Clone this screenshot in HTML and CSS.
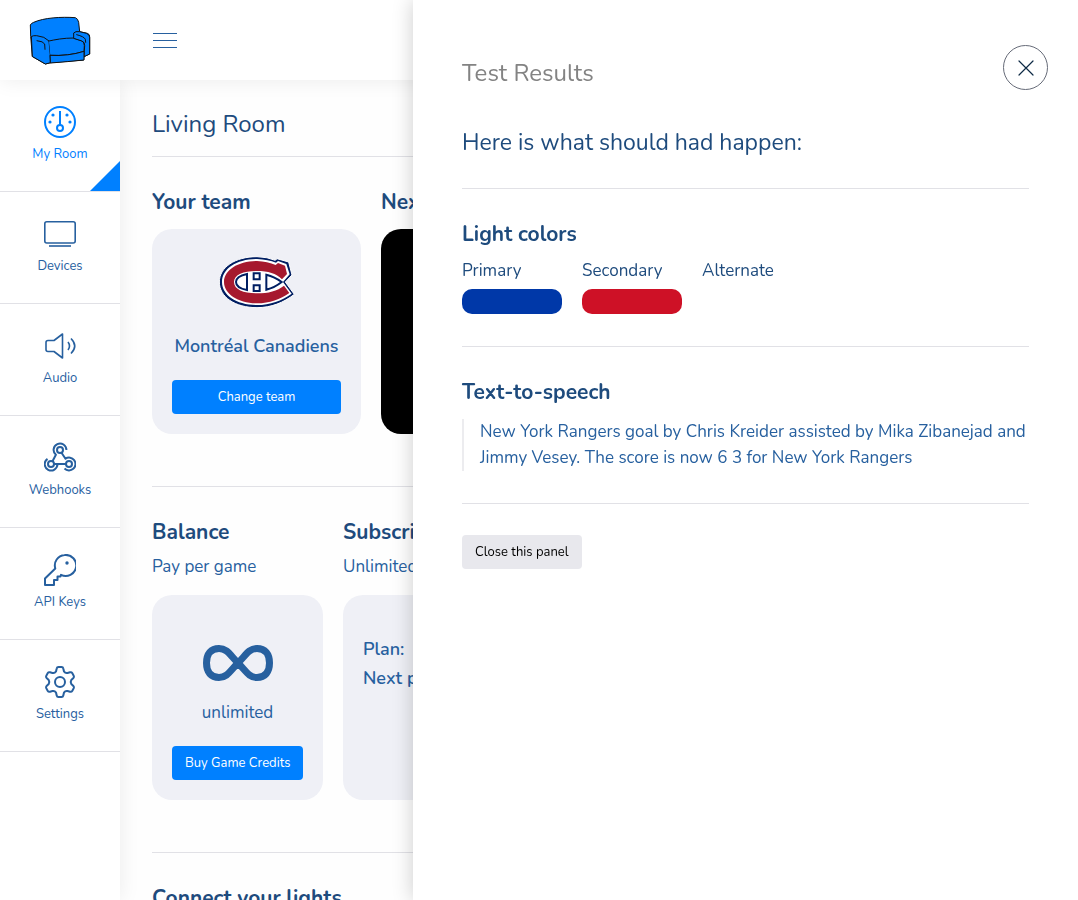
FILE: index.html
```html
<!DOCTYPE html>
<html lang="en">
<head>
    <meta charset="UTF-8">
    <meta name="viewport" content="width=device-width, initial-scale=1.0">
    <title>Living Room</title>
    <link rel="stylesheet" href="styles.css">
</head>
<body>
    <header class="topbar">
        <a href="#" class="brand" aria-label="Home">
            <svg class="brand-logo" viewBox="87 45 186 147" fill="#0080ff" stroke="#111" stroke-width="3" stroke-linecap="round" stroke-linejoin="round">
                <path d="M92 105 L91 72 Q93 67 101 64 C132 50 184 47 226 50 Q234 53 236 64 L239 92 L262 97 Q270 100 269 108 L269 159 L252 167 L251 177 L152 185 L136 189 L98 167 Z"/>
                <path d="M95 106 Q99 103 110 104 Q134 106 147 120 L151 163 L152 185 L136 189 L98 167 Z"/>
                <path d="M147 120 C165 116 190 111 221 111 L246 120 Q254 125 253 134 L252 151 Q205 166 151 163"/>
                <path d="M221 111 L221 96 Q226 90 239 92 L259 97 Q270 101 269 110 L269 159 L252 167 L254 134 Q255 123 246 120 Z"/>
                <path d="M111 119 Q130 121 134 129 L135 145 M230 101 Q253 107 256 115 L257 124" fill="none"/>
                <path d="M151 163 Q205 166 252 151 L252 177 Q205 182 152 186 Z"/>
            </svg>
        </a>
        <button class="menu-toggle" type="button" aria-label="Toggle menu">
            <span></span><span></span><span></span>
        </button>
    </header>

    <div class="layout">
        <nav class="sidebar">
            <a href="#" class="nav-item active">
                <svg class="nav-icon" viewBox="0 0 32 32">
                    <circle cx="16" cy="16" r="15"/>
                    <path d="M16 5v14"/>
                    <circle cx="16" cy="22" r="3"/>
                    <g class="dots"><circle cx="9" cy="9" r="1.6"/><circle cx="23" cy="9" r="1.6"/><circle cx="6" cy="16" r="1.6"/><circle cx="26" cy="16" r="1.6"/></g>
                </svg>
                <span>My Room</span>
            </a>
            <a href="#" class="nav-item">
                <svg class="nav-icon thin" viewBox="0 0 32 32">
                    <rect x="0.8" y="3.8" width="30.4" height="21.2" rx="2"/>
                    <path d="M5 28h22"/>
                </svg>
                <span>Devices</span>
            </a>
            <a href="#" class="nav-item">
                <svg class="nav-icon thin" viewBox="0 0 32 32">
                    <path d="M18.5 4v24l-8.500-6.500H4q-2 0-2-2v-7q0-2 2-2h6z"/>
                    <path d="M24 12q3 4 0 8M27 8.500q7.500 7.500 0 15"/>
                </svg>
                <span>Audio</span>
            </a>
            <a href="#" class="nav-item">
                <svg class="nav-icon" viewBox="0 0 32 32">
                    <circle cx="16" cy="8" r="3"/>
                    <circle cx="7" cy="22" r="3"/>
                    <circle cx="25" cy="22" r="3"/>
                    <path d="M22.400 8a6.400 6.400 0 1 0-10.500 4.800L8.500 19.200M17.500 10.700l4 6a6.400 6.400 0 1 1-1 9.800M10 22h12M3.500 16.800a6.400 6.400 0 1 0 10 5.200"/>
                </svg>
                <span>Webhooks</span>
            </a>
            <a href="#" class="nav-item">
                <svg class="nav-icon" viewBox="0 0 32 32">
                    <path d="M20.500 1A10.500 10.500 0 1 1 17 20.800L16.500 22.500H13.500V26H10V31H1v-6.500L11.300 14.500A10.500 10.500 0 0 1 20.500 1z"/>
                    <circle class="dot" cx="23" cy="9" r="1.700"/>
                </svg>
                <span>API Keys</span>
            </a>
            <a href="#" class="nav-item">
                <svg class="nav-icon" viewBox="0 0 32 32">
                    <circle cx="16" cy="16" r="5"/>
                    <path d="M14.500 1h3q1.500 0 1.800 1.500L20 5.500q1.300 2 3.500 1.500l2.500-.7q1.500-.4 2.200.8l1.500 2.600q.7 1.300-.3 2.300L27.300 14q-1.200 2 0 4l2.100 2q1 1 .3 2.300l-1.500 2.600q-.7 1.200-2.200.8l-2.500-.7q-2.200-.5-3.500 1.500l-.7 3Q19 31 17.500 31h-3q-1.500 0-1.800-1.500L12 26.500q-1.300-2-3.500-1.500L6 25.700q-1.500.4-2.200-.8l-1.500-2.600q-.7-1.300.3-2.300L4.700 18q1.200-2 0-4L2.600 12q-1-1-.3-2.300l1.500-2.600Q4.500 5.900 6 6.300L8.500 7Q10.700 7.500 12 5.500l.7-3Q13 1 14.500 1z"/>
                </svg>
                <span>Settings</span>
            </a>
        </nav>

        <main class="content">
            <h1>Living Room</h1>

            <section class="section team-row">
                <div class="team">
                    <h2>Your team</h2>
                    <div class="card">
                        <svg class="team-logo" viewBox="236 499 228 156" role="img" aria-label="Canadiens">
                            <path d="M405 512 L410 507 L445 517 L455 556 L435 577 L462 614 C430 639 392 654 350 654 C284 654 237 622 237 577 C237 533 284 501 350 501 Q382 502 405 512 Z" fill="#001e62" stroke="#fff" stroke-width="3"/>
                            <path d="M407 519 L413 514 L438 523 L448 554 L428 577 L454 612 C424 633 390 646 350 646 C289 646 245 617 245 577 C245 537 289 508 350 508 Q384 510 407 519 Z" fill="#fff"/>
                            <path d="M406 526 L413 520 L434 528 L440 553 L425 569 C408 551 383 544 350 544 C311 544 281 554 281 577 C281 600 311 611 350 611 C384 611 411 604 431 588 L447 610 C420 629 388 641 350 641 C294 641 251 613 251 577 C251 541 294 514 350 514 Q382 516 406 526 Z" fill="#a6192e"/>
                            <path d="M320 553 Q287 560 287 577 Q287 595 320 601 Z M378 555 Q403 561 424 577 Q403 594 378 600 Z M340 551 H358 V569 H340 Z M340 587 H358 V604 H340 Z" fill="#fff" stroke="#001e62" stroke-width="6"/>
                        </svg>
                        <p class="team-name">Montréal Canadiens</p>
                        <button class="btn btn-primary" type="button">Change team</button>
                    </div>
                </div>
                <div class="game">
                    <h2>Next game</h2>
                    <div class="card card-dark"></div>
                </div>
            </section>

            <section class="section plan-row">
                <div class="balance">
                    <h2>Balance</h2>
                    <p class="subtitle">Pay per game</p>
                    <div class="card">
                        <svg class="infinity" viewBox="0 0 70 36" fill="none" stroke="currentColor" stroke-width="7">
                            <path d="M35 18C27 10 24 3.500 16 3.500C8 3.500 3.500 9 3.500 18S8 32.500 16 32.500C24 32.500 27 26 35 18S46 3.500 54 3.500C62 3.500 66.500 9 66.500 18S62 32.500 54 32.500C46 32.500 43 26 35 18Z"/>
                        </svg>
                        <p class="amount">unlimited</p>
                        <button class="btn btn-primary" type="button">Buy Game Credits</button>
                    </div>
                </div>
                <div class="subscription">
                    <h2>Subscription</h2>
                    <p class="subtitle">Unlimited games</p>
                    <div class="card card-plan">
                        <p>Plan:</p>
                        <p>Next payment:</p>
                    </div>
                </div>
            </section>

            <section class="section">
                <h2>Connect your lights</h2>
            </section>
        </main>
    </div>

    <aside class="panel" aria-labelledby="panelTitle">
        <button class="panel-close" type="button" aria-label="Close">
            <svg viewBox="0 0 16 16" fill="none" stroke="currentColor" stroke-width="1.200" stroke-linecap="round">
                <path d="M1 1l14 14M15 1L1 15"/>
            </svg>
        </button>
        <h2 class="panel-title" id="panelTitle">Test Results</h2>
        <p class="lead">Here is what should had happen:</p>

        <section class="panel-section">
            <h3>Light colors</h3>
            <div class="colors">
                <div class="color">
                    <span>Primary</span>
                    <div class="swatch swatch-primary"></div>
                </div>
                <div class="color">
                    <span>Secondary</span>
                    <div class="swatch swatch-secondary"></div>
                </div>
                <div class="color">
                    <span>Alternate</span>
                </div>
            </div>
        </section>

        <section class="panel-section">
            <h3>Text-to-speech</h3>
            <blockquote>New York Rangers goal by Chris Kreider assisted by Mika Zibanejad and Jimmy Vesey. The score is now 6 3 for New York Rangers</blockquote>
        </section>

        <section class="panel-section">
            <button class="btn btn-light" type="button">Close this panel</button>
        </section>
    </aside>
</body>
</html>
```
FILE: styles.css
```css
:root {
    --primary: #0080ff;
    --heading: #1e4b7d;
    --text: #27609f;
    --line: #e1e1e6;
    --card: #eff0f6;
}

* {
    margin: 0;
    padding: 0;
    box-sizing: border-box;
}

body {
    height: 100vh;
    overflow: hidden;
    display: flex;
    flex-direction: column;
    font-family: Nunito, "Open Sans", "Noto Sans", sans-serif;
    font-size: 17px;
    line-height: 24px;
    color: var(--text);
    background: #fefefe;
}

/* Top bar */
.topbar {
    position: relative;
    z-index: 2;
    flex: none;
    display: flex;
    align-items: center;
    height: 80px;
    background: #fff;
    box-shadow: 0 0 20px rgba(0, 0, 0, 0.08);
}

.brand {
    width: 120px;
    display: flex;
    justify-content: center;
}

.brand-logo {
    width: 62px;
    height: 49px;
}

.menu-toggle {
    margin-left: 33px;
    width: 24px;
    display: grid;
    gap: 6px;
    border: none;
    background: none;
    cursor: pointer;
}

.menu-toggle span {
    height: 1px;
    background: var(--text);
}

.layout {
    flex: 1;
    display: flex;
    min-height: 0;
}

/* Sidebar */
.sidebar {
    flex: none;
    width: 120px;
    background: #fff;
    box-shadow: 0 0 20px rgba(0, 0, 0, 0.08);
}

.nav-item {
    position: relative;
    display: flex;
    flex-direction: column;
    align-items: center;
    gap: 4px;
    height: 112px;
    padding-top: 26px;
    border-bottom: 1px solid var(--line);
    font-size: 13px;
    color: var(--text);
    text-decoration: none;
}

.nav-item.active {
    color: var(--primary);
}

.nav-item.active::after {
    content: "";
    position: absolute;
    right: 0;
    bottom: 0;
    border-left: 30px solid transparent;
    border-bottom: 30px solid var(--primary);
}

.nav-icon {
    width: 32px;
    height: 32px;
    fill: none;
    stroke: currentColor;
    stroke-width: 2;
    stroke-linejoin: round;
}

.nav-icon.thin {
    stroke-width: 1.6;
}

.nav-icon .dots,
.nav-icon .dot {
    fill: currentColor;
    stroke: none;
}

/* Content */
.content {
    flex: 1;
    min-width: 0;
    padding: 28px 32px 0;
    overflow: hidden;
}

h1 {
    margin-bottom: 16px;
    font-size: 24px;
    font-weight: 400;
    line-height: 32px;
    color: var(--heading);
}

h2,
h3 {
    font-size: 21px;
    font-weight: 700;
    line-height: 28px;
    color: var(--heading);
}

.section {
    display: grid;
    gap: 20px;
    padding: 31px 0 52px;
    border-top: 1px solid var(--line);
}

.team-row {
    grid-template-columns: 209px 1fr;
}

.plan-row {
    grid-template-columns: 171px 1fr;
}

.card {
    display: flex;
    flex-direction: column;
    align-items: center;
    height: 205px;
    margin-top: 13px;
    padding: 20px;
    border-radius: 20px;
    background: var(--card);
    white-space: nowrap;
}

.card-dark {
    background: #000;
}

.card-plan {
    align-items: flex-start;
    padding-top: 40px;
    font-size: 18px;
    font-weight: 600;
    line-height: 29px;
}

.card .btn {
    width: 100%;
    margin-top: auto;
}

.team-logo {
    width: 76px;
    height: 52px;
    margin-top: 7px;
}

.team-name {
    margin-top: 26px;
    font-size: 18px;
    font-weight: 600;
}

.subtitle {
    margin-top: 9px;
}

.subtitle + .card {
    margin-top: 16px;
}

.infinity {
    width: 70px;
    height: 36px;
    margin-top: 30px;
}

.amount {
    margin-top: 20px;
}

.btn {
    height: 34px;
    padding: 0 13px;
    border: none;
    border-radius: 4px;
    font-family: inherit;
    font-size: 13px;
    cursor: pointer;
}

.btn-primary {
    background: var(--primary);
    color: #fff;
}

.btn-light {
    background: #e8e8ed;
    color: #000;
}

/* Slide-in panel */
.panel {
    position: fixed;
    z-index: 3;
    top: 0;
    right: 0;
    bottom: 0;
    width: 665px;
    max-width: 100%;
    padding: 57px 49px;
    background: #fff;
    box-shadow: 0 0 20px rgba(0, 0, 0, 0.2);
}

.panel-close {
    position: absolute;
    top: 45px;
    right: 30px;
    width: 45px;
    height: 45px;
    display: grid;
    place-items: center;
    border: 1px solid #666b78;
    border-radius: 50%;
    background: #fff;
    color: #0d2a45;
    cursor: pointer;
}

.panel-close svg {
    width: 16px;
    height: 16px;
}

.panel-title {
    font-size: 24px;
    font-weight: 400;
    line-height: 32px;
    color: #838383;
}

.lead {
    margin: 38px 0 29px;
    font-size: 23px;
    line-height: 32px;
    color: var(--heading);
}

.panel-section {
    padding: 31px 0 32px;
    border-top: 1px solid var(--line);
}

.colors {
    display: flex;
    gap: 20px;
    margin-top: 11px;
    color: var(--heading);
}

.color {
    width: 100px;
}

.swatch {
    height: 25px;
    margin-top: 6px;
    border-radius: 10px;
}

.swatch-primary {
    background: #0038a8;
}

.swatch-secondary {
    background: #ce1126;
}

blockquote {
    margin-top: 13px;
    padding-left: 16px;
    border-left: 2px solid #ececef;
    line-height: 26px;
}
```
